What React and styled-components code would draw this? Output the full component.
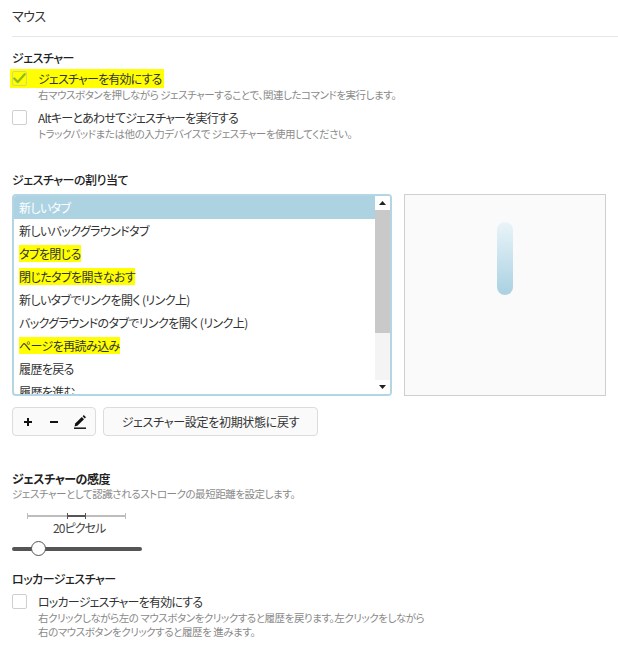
import React from "react";
import styled, { createGlobalStyle } from "styled-components";

const Global = createGlobalStyle`
  html, body { margin: 0; padding: 0; background: #fff; }
  body {
    font-family: "Noto Sans CJK JP", "Noto Sans", sans-serif;
    color: #333;
    font-feature-settings: "palt";
  }
`;

const Page = styled.div`
  width: 618px;
  padding: 0 0 0 12px;
  box-sizing: border-box;
`;

const Title = styled.div`
  font-size: 13px;
  line-height: 18px;
  padding-top: 7px;
  padding-bottom: 11px;
  border-bottom: 1px solid #e6e6e6;
  color: #333;
  letter-spacing: -0.5px;
`;

const Heading = styled.div`
  font-size: 12px;
  line-height: 16px;
  font-weight: ${(p) => (p.$bold ? 700 : 500)};
  color: #222;
  letter-spacing: -0.5px;
  margin-top: ${(p) => p.$mt || 0}px;
`;

const Option = styled.div`
  display: flex;
  flex-direction: column;
  margin-top: ${(p) => p.$mt || 0}px;
`;

const OptionHead = styled.div`
  display: inline-flex;
  align-self: flex-start;
  align-items: center;
  gap: 11px;
  height: 19px;
  margin-left: -2px;
  padding: 0 2px;
  background: ${(p) => (p.$hl ? "#ffff00" : "transparent")};
`;

const Box = styled.span`
  width: 15px;
  height: 15px;
  box-sizing: border-box;
  border: 1px solid ${(p) => (p.$checked ? "#d8d86a" : "#cfcfcf")};
  border-radius: 2px;
  background: ${(p) => (p.$checked ? "transparent" : "#fff")};
  display: flex;
  align-items: center;
  justify-content: center;
`;

const Label = styled.span`
  font-size: 12px;
  line-height: 16px;
  color: #333;
  letter-spacing: -0.8px;
`;

const Desc = styled.div`
  font-size: 10.5px;
  line-height: 14px;
  color: #8a8a8a;
  letter-spacing: -0.45px;
  padding-left: ${(p) => (p.$flush ? 0 : 26)}px;
  margin-top: ${(p) => p.$mt || 0}px;
`;

const AssignRow = styled.div`
  display: flex;
  gap: 12px;
  margin-top: 6px;
`;

const ListBox = styled.div`
  width: 380px;
  height: 202px;
  box-sizing: border-box;
  border: 2px solid #b4d6e4;
  border-radius: 4px;
  display: flex;
  overflow: hidden;
  background: #fff;
`;

const Items = styled.div`
  flex: 1;
  overflow: hidden;
`;

const Item = styled.div`
  height: 23px;
  display: flex;
  align-items: center;
  padding-left: 5px;
  font-size: 12px;
  letter-spacing: -0.6px;
  color: ${(p) => (p.$sel ? "#fff" : "#333")};
  background: ${(p) => (p.$sel ? "#add3e3" : "transparent")};
  white-space: nowrap;
`;

const Mark = styled.span`
  background: ${(p) => (p.$hl ? "#ffff00" : "transparent")};
  line-height: 17px;
`;

const Scrollbar = styled.div`
  width: 15px;
  display: flex;
  flex-direction: column;
  background: #f4f4f4;
`;

const Arrow = styled.div`
  height: 14px;
  display: flex;
  align-items: center;
  justify-content: center;
  background: #fff;
`;

const Thumb = styled.div`
  height: 123px;
  background: #c9c9c9;
`;

const Track = styled.div`
  flex: 1;
`;

const Preview = styled.div`
  width: 202px;
  height: 202px;
  box-sizing: border-box;
  border: 1px solid #cfcfcf;
  background: #fafafa;
`;

const ButtonRow = styled.div`
  display: flex;
  gap: 7px;
  margin-top: 11px;
`;

const Btn = styled.div`
  height: 29px;
  box-sizing: border-box;
  border: 1px solid #dcdcdc;
  border-radius: 4px;
  background: #fafafa;
  display: flex;
  align-items: center;
  justify-content: center;
  font-size: 12px;
  letter-spacing: -0.3px;
  color: #333;
  width: ${(p) => p.$w}px;
`;

const IconSlot = styled.span`
  width: 26px;
  display: flex;
  justify-content: center;
  align-items: center;
`;

const Scale = styled.div`
  width: 130px;
  margin-top: 11px;
  display: flex;
  flex-direction: column;
  align-items: flex-start;
`;

const ScaleLabel = styled.div`
  font-size: 12px;
  line-height: 14px;
  color: #444;
  margin-left: 41px;
  margin-top: 1px;
  letter-spacing: -0.9px;
`;

const SliderWrap = styled.div`
  position: relative;
  width: 130px;
  height: 16px;
  margin-top: 6px;
`;

const SliderTrack = styled.div`
  position: absolute;
  left: 0;
  right: 0;
  top: 6px;
  height: 4px;
  border-radius: 2px;
  background: #555;
`;

const SliderThumb = styled.div`
  position: absolute;
  top: 0;
  left: 19px;
  width: 15px;
  height: 15px;
  box-sizing: border-box;
  border-radius: 50%;
  border: 1px solid #555;
  background: #fff;
`;

const items = [
  { t: "新しいタブ", sel: true },
  { t: "新しいバックグラウンドタブ" },
  { t: "タブを閉じる", hl: true },
  { t: "閉じたタブを開きなおす", hl: true },
  { t: "新しいタブでリンクを開く (リンク上)" },
  { t: "バックグラウンドのタブでリンクを開く (リンク上)" },
  { t: "ページを再読み込み", hl: true },
  { t: "履歴を戻る" },
  { t: "履歴を進む" },
];

const Check = () => (
  <svg width="15" height="13" viewBox="0 0 15 13">
    <path d="M1.5 6.5 L5.5 10.5 L13.5 1.5" fill="none" stroke="#8dbb1f" strokeWidth="2.6" strokeLinecap="round" strokeLinejoin="round" />
  </svg>
);

export default function App() {
  return (
    <Page>
      <Global />
      <Title>マウス</Title>

      <Heading $mt={13}>ジェスチャー</Heading>
      <Option $mt={3}>
        <OptionHead $hl>
          <Box $checked>
            <Check />
          </Box>
          <Label>ジェスチャーを有効にする</Label>
        </OptionHead>
        <Desc>右マウスボタンを押しながら ジェスチャーすることで、関連したコマンドを実行します。</Desc>
      </Option>
      <Option $mt={6}>
        <OptionHead>
          <Box />
          <Label>Altキーとあわせてジェスチャーを実行する</Label>
        </OptionHead>
        <Desc>トラックパッドまたは他の入力デバイスで ジェスチャーを使用してください。</Desc>
      </Option>

      <Heading $mt={31}>ジェスチャーの割り当て</Heading>
      <AssignRow>
        <ListBox>
          <Items>
            {items.map((it) => (
              <Item key={it.t} $sel={it.sel}>
                <Mark $hl={it.hl}>{it.t}</Mark>
              </Item>
            ))}
          </Items>
          <Scrollbar>
            <Arrow>
              <svg width="7" height="4" viewBox="0 0 7 4"><path d="M0 4 L3.5 0 L7 4Z" fill="#222" /></svg>
            </Arrow>
            <Thumb />
            <Track />
            <Arrow>
              <svg width="7" height="4" viewBox="0 0 7 4"><path d="M0 0 L3.5 4 L7 0Z" fill="#222" /></svg>
            </Arrow>
          </Scrollbar>
        </ListBox>
        <Preview>
          <svg width="200" height="200" viewBox="0 0 200 200">
            <defs>
              <linearGradient id="stroke" x1="0" y1="0" x2="0" y2="1">
                <stop offset="0" stopColor="#eaf4f9" />
                <stop offset="1" stopColor="#a9d1e2" />
              </linearGradient>
            </defs>
            <rect x="92" y="27" width="16" height="73" rx="8" fill="url(#stroke)" />
          </svg>
        </Preview>
      </AssignRow>

      <ButtonRow>
        <Btn $w={84}>
          <IconSlot>
            <svg width="10" height="10" viewBox="0 0 10 10"><path d="M5 1V9M1 5H9" stroke="#111" strokeWidth="2" /></svg>
          </IconSlot>
          <IconSlot>
            <svg width="10" height="10" viewBox="0 0 10 10"><path d="M1 5H9" stroke="#111" strokeWidth="2" /></svg>
          </IconSlot>
          <IconSlot>
            <svg width="14" height="15" viewBox="0 0 14 15">
              <path d="M2.2 9.6 L8.8 3 L11 5.2 L4.4 11.8 L1.6 12.4Z" fill="#111" />
              <path d="M9.6 2.2 L10.8 1 L13 3.2 L11.8 4.4Z" fill="#111" />
              <path d="M1 14.2H13" stroke="#111" strokeWidth="1.5" />
            </svg>
          </IconSlot>
        </Btn>
        <Btn $w={215}>ジェスチャー設定を初期状態に戻す</Btn>
      </ButtonRow>

      <Heading $mt={35} $bold>ジェスチャーの感度</Heading>
      <Desc $flush>ジェスチャーとして認識されるストロークの最短距離を設定します。</Desc>
      <Scale>
        <svg width="130" height="8" viewBox="0 0 130 8">
          <path d="M15 4H114" stroke="#bdbdbd" strokeWidth="2" />
          <path d="M15.5 1V7M113.5 1V7" stroke="#bdbdbd" strokeWidth="1" />
          <path d="M55 4H74" stroke="#555" strokeWidth="2" />
          <path d="M55.5 1V7M73.5 1V7" stroke="#555" strokeWidth="1" />
        </svg>
        <ScaleLabel>20ピクセル</ScaleLabel>
      </Scale>
      <SliderWrap>
        <SliderTrack />
        <SliderThumb />
      </SliderWrap>

      <Heading $mt={14}>ロッカージェスチャー</Heading>
      <Option $mt={5}>
        <OptionHead>
          <Box />
          <Label>ロッカージェスチャーを有効にする</Label>
        </OptionHead>
        <Desc>
          右クリックしながら左の マウスボタンをクリックすると履歴を戻ります。左クリックをしながら
          <br />
          右のマウスボタンをクリックすると履歴を 進みます。
        </Desc>
      </Option>
    </Page>
  );
}
